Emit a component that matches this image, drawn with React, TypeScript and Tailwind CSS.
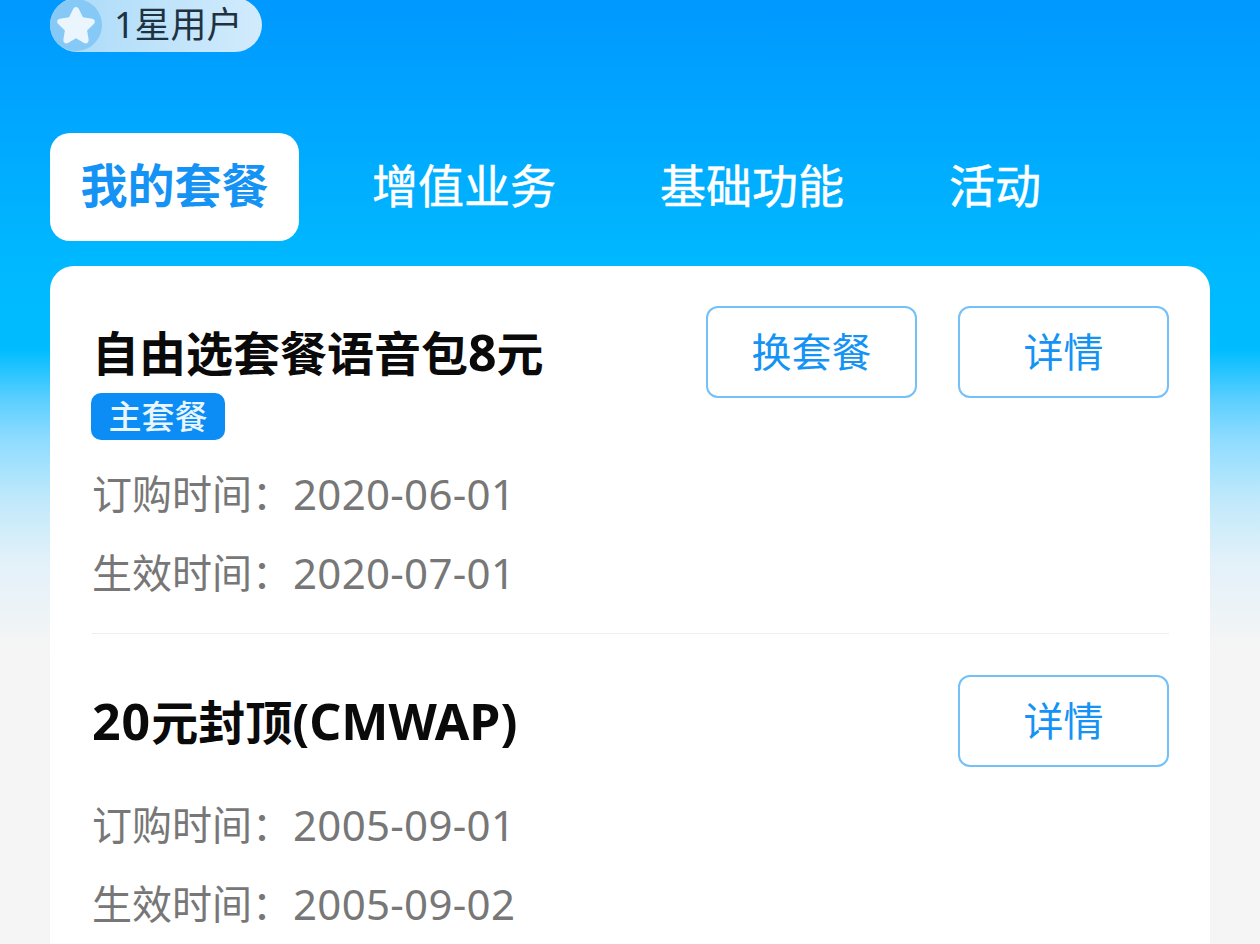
const FONT = "font-['Noto_Sans','Noto_Sans_CJK_SC',sans-serif]";

function OutlineButton({ label }: { label: string }) {
  return (
    <button className="w-[211px] h-[92px] rounded-[12px] border-2 border-[#74c0f8] bg-white text-[40px] leading-none text-[#1593f5]">
      {label}
    </button>
  );
}

function InfoLine({ label, value }: { label: string; value: string }) {
  return (
    <div className="flex items-center h-[78.5px] text-[40px] text-[#777777] leading-none">
      <span className="w-[201px]">{label}{"\uFF1A"}</span>
      <span className="text-[42px] tracking-[0.3px]">{value}</span>
    </div>
  );
}

export default function App() {
  return (
    <div className={`${FONT} w-[1260px] h-[944px] overflow-hidden bg-[linear-gradient(180deg,#0098ff_0px,#00b8ff_260px,#00bdff_350px,#5ccfff_400px,#8fdcff_440px,#c0e9fb_500px,#e2f1f9_560px,#f5f5f5_650px)]`}>
      <div className="px-[50px]">
        <div className="flex items-center w-[212px] h-[54px] -mt-[2px] rounded-full bg-gradient-to-r from-[#a9daf9] to-[#d2ebfc]">
          <div className="flex items-center justify-center shrink-0 w-[52px] h-[52px] rounded-full bg-[#86c9f6]">
            <svg width="46" height="46" viewBox="0 0 24 24" fill="#eaf5fe">
              <path d="M12 2.6c.7 0 1.2.4 1.5 1l2.1 4.4 4.8.7c1.4.2 1.9 1.8.9 2.8l-3.5 3.4.8 4.8c.2 1.4-1.2 2.4-2.4 1.7L12 18.9l-4.2 2.5c-1.2.7-2.6-.3-2.4-1.7l.8-4.8-3.5-3.4c-1-1-.5-2.6.9-2.8l4.8-.7 2.1-4.4c.3-.6.8-1 1.5-1z" />
            </svg>
          </div>
          <span className="ml-[12px] text-[36px] leading-none text-[#1f3242]">1星用户</span>
        </div>

        <div className="flex items-center mt-[81px] h-[108px] text-[46px] leading-none text-white">
          <div className="flex items-center justify-center w-[249px] h-[108px] pb-[4px] rounded-[20px] bg-white font-bold text-[47px] text-[#1593f5]">
            我的套餐
          </div>
          <div className="ml-[73px] pb-[4px] [-webkit-text-stroke:0.5px_white]">增值业务</div>
          <div className="ml-[104px] pb-[4px] [-webkit-text-stroke:0.5px_white]">基础功能</div>
          <div className="ml-[105px] pb-[4px] [-webkit-text-stroke:0.5px_white]">活动</div>
        </div>

        <div className="mt-[25px] h-[700px] rounded-[24px] bg-white pl-[42px] pr-[41px] pt-[40px]">
          <div className="border-b border-[#eeeeee] h-[328px]">
            <div className="flex justify-between">
              <div>
                <div className="flex items-center h-[92px] text-[47px] leading-none font-bold text-[#0a0a0a]">
                  <span>自由选套餐语音包<span className="text-[50px]">8</span>元</span>
                </div>
                <div className="flex items-center justify-center w-[134px] h-[47px] mt-[-5px] -ml-[1px] rounded-[10px] bg-[#0c8df5] text-[33px] leading-none font-medium text-[#e9f5ff]">
                  主套餐
                </div>
              </div>
              <div className="flex gap-[41px]">
                <OutlineButton label="换套餐" />
                <OutlineButton label="详情" />
              </div>
            </div>
            <div className="mt-[15px]">
              <InfoLine label="订购时间" value="2020-06-01" />
              <InfoLine label="生效时间" value="2020-07-01" />
            </div>
          </div>

          <div className="pt-[41px]">
            <div className="flex justify-between">
              <div className="flex items-center h-[92px] text-[47px] leading-none font-bold text-[#0a0a0a]">
                <span><span className="text-[50px] tracking-[1px]">20</span>元封顶<span className="text-[50px]">(CMWAP)</span></span>
              </div>
              <OutlineButton label="详情" />
            </div>
            <div className="mt-[19px]">
              <InfoLine label="订购时间" value="2005-09-01" />
              <InfoLine label="生效时间" value="2005-09-02" />
            </div>
          </div>
        </div>
      </div>
    </div>
  );
}
